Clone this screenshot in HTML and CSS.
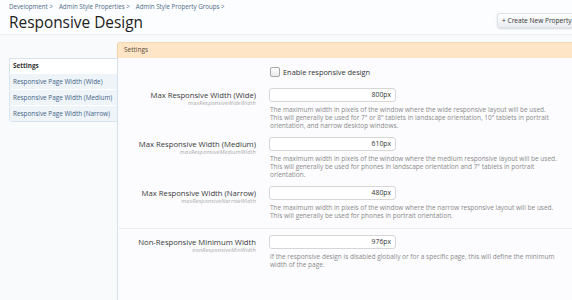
FILE: index.html
```html
<!DOCTYPE html>
<html>
<head>
<meta charset="utf-8">
<link rel="stylesheet" href="styles.css">
</head>
<body>
<div class="top">
  <div class="crumbs">
    <span class="crumb">Development &gt;</span>
    <span class="crumb">Admin Style Properties &gt;</span>
    <span class="crumb">Admin Style Property Groups &gt;</span>
  </div>
  <div class="titlebar">
    <h1 class="title">Responsive Design</h1>
    <span class="btn">+ Create New Property</span>
  </div>
</div>
<div class="layout">
  <div class="tab"><span class="tabtext">Settings</span></div>
  <div class="side">
    <div class="side-head">Settings</div>
    <div class="side-item">Responsive Page Width (Wide)</div>
    <div class="side-item">Responsive Page Width (Medium)</div>
    <div class="side-item">Responsive Page Width (Narrow)</div>
  </div>
  <div class="main">
    <div class="row check-row">
      <div class="lab"></div>
      <div class="ctl"><label class="chk"><span class="box"></span>Enable responsive design</label></div>
    </div>
    <div class="row">
      <div class="lab"><div class="lab-main">Max Responsive Width (Wide)</div><div class="lab-sub">maxResponsiveWideWidth</div></div>
      <div class="ctl"><div class="input">800px</div><p class="desc">The maximum width in pixels of the window where the wide responsive layout will be used. This will generally be used for 7" or 8" tablets in landscape orientation, 10" tablets in portrait orientation, and narrow desktop windows.</p></div>
    </div>
    <div class="row">
      <div class="lab"><div class="lab-main">Max Responsive Width (Medium)</div><div class="lab-sub">maxResponsiveMediumWidth</div></div>
      <div class="ctl"><div class="input">610px</div><p class="desc">The maximum width in pixels of the window where the medium responsive layout will be used. This will generally be used for phones in landscape orientation and 7" tablets in portrait orientation.</p></div>
    </div>
    <div class="row last">
      <div class="lab"><div class="lab-main">Max Responsive Width (Narrow)</div><div class="lab-sub">maxResponsiveNarrowWidth</div></div>
      <div class="ctl"><div class="input">480px</div><p class="desc">The maximum width in pixels of the window where the narrow responsive layout will be used. This will generally be used for phones in portrait orientation.</p></div>
    </div>
    <div class="row sep">
      <div class="lab"><div class="lab-main">Non-Responsive Minimum Width</div><div class="lab-sub">nonResponsiveMinWidth</div></div>
      <div class="ctl"><div class="input">976px</div><p class="desc">If the responsive design is disabled globally or for a specific page, this will define the minimum width of the page.</p></div>
    </div>
  </div>
</div>
</body>
</html>
```
FILE: styles.css
```css
html, body {
  margin: 0;
  padding: 0;
}
body {
  background: #f9fafc;
  font-family: "Open Sans", "Liberation Sans", sans-serif;
  color: #333;
  height: 300px;
  overflow: hidden;
}
.top {
  background: #fcfdfe;
  border-bottom: 1px solid #eef0f3;
  padding: 2px 0 0 9px;
  height: 32px;
}
.crumbs {
  font-size: 6.2px;
  color: #4d6a86;
  line-height: 9px;
  display: flex;
  gap: 6px;
}
.titlebar {
  display: flex;
  justify-content: space-between;
  align-items: flex-start;
}
.title {
  margin: 2px 0 0 0;
  font-weight: normal;
  font-size: 15.4px;
  line-height: 20px;
  color: #222;
  font-family: "Open Sans", sans-serif;
}
.btn {
  margin-top: 2px;
  display: block;
  width: 70px;
  height: 13px;
  line-height: 13px;
  font-size: 6.6px;
  color: #333;
  padding-left: 4px;
  white-space: nowrap;
  overflow: hidden;
  border-radius: 3px 0 0 3px;
  background: linear-gradient(#ffffff, #e9edf1);
  border: 1px solid #dfe3e8;
  border-right: none;
  box-shadow: 0 1px 2px rgba(0,0,0,0.15);
}
.layout {
  display: grid;
  grid-template-columns: 108px 1fr;
  grid-template-rows: 16px 1fr;
  margin: 7px 0 0 9px;
  height: 258px;
}
.tab {
  grid-column: 2;
  grid-row: 1;
  background: #fde5c6;
  border-top: 1px solid #f3d7b3;
  border-left: 1px solid #efd2ab;
  border-radius: 3px 0 0 0;
  font-size: 6.5px;
  color: #5a4a3a;
  line-height: 14px;
  padding-left: 6px;
}
.side {
  grid-column: 1;
  grid-row: 2;
  align-self: start;
  border: 1px solid #d7e3ee;
  border-right: none;
  border-radius: 0 0 0 3px;
  background: #fff;
  font-size: 6.4px;
}
.side-head {
  font-weight: bold;
  color: #333;
  height: 14px;
  line-height: 14px;
  padding-left: 3px;
  background: #fff;
}
.side-item {
  height: 15px;
  line-height: 15px;
  padding-left: 3px;
  color: #3f6386;
  background: #eff4f9;
  border-top: 1px solid #fff;
}
.main {
  grid-column: 2;
  grid-row: 2;
  border-left: 1px solid #d5e2ee;
  background: #fcfcfe;
  padding-top: 8px;
}
.row {
  display: grid;
  grid-template-columns: 138px 1fr;
  column-gap: 13px;
  margin-bottom: 7px;
}
.check-row {
  margin-bottom: 10px;
}
.chk {
  display: flex;
  align-items: center;
  gap: 3px;
  font-size: 7.4px;
  color: #333;
  height: 12px;
  margin-left: 1px;
}
.box {
  width: 8px;
  height: 8px;
  border: 1px solid #a8a8a8;
  border-radius: 2px;
  background: linear-gradient(#fff, #eaeaea);
}
.lab {
  text-align: right;
  padding-top: 3px;
}
.lab-main {
  font-size: 7.7px;
  line-height: 9px;
  color: #3a3a3a;
}
.lab-sub {
  font-size: 5.6px;
  font-style: italic;
  color: #aaa;
  line-height: 7px;
  letter-spacing: 0.15px;
}
.input {
  width: 121px;
  height: 12px;
  border: 1px solid #d6d6d6;
  border-radius: 3px;
  background: #fff;
  font-size: 6.8px;
  line-height: 12px;
  text-align: right;
  padding-right: 4px;
  color: #333;
}
.desc {
  margin: 4px 0 0 1px;
  font-size: 6.5px;
  line-height: 8px;
  color: #8a8a8a;
  width: 287px;
}
.row.last {
  margin-bottom: 0;
  padding-bottom: 8px;
}
.row.sep {
  border-top: 1px solid #eceef2;
  padding-top: 6px;
}
```
